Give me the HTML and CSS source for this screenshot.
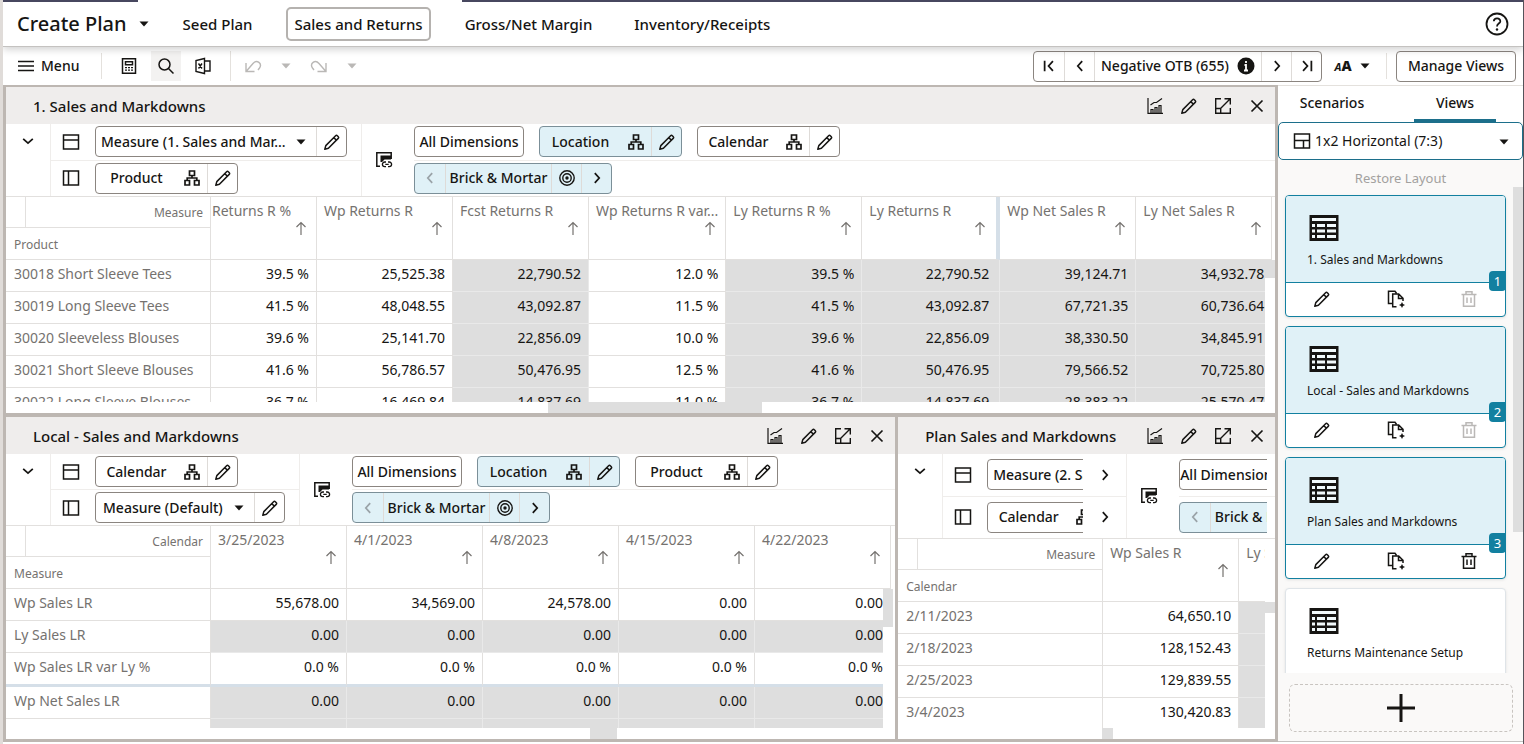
FILE: index.html
```html
<!DOCTYPE html>
<html lang="en">
<head>
    <meta charset="UTF-8">
    <meta name="viewport" content="width=device-width, initial-scale=1.0">
    <title>Create Plan - Sales and Returns</title>
    <link rel="stylesheet" href="styles.css">
</head>
<body>
    <!-- Icon set -->
    <svg class="sprite" aria-hidden="true">
        <symbol id="caret" viewBox="0 0 10 6"><path d="M0.5 0.5h9L5 5.5z" fill="currentColor"/></symbol>
        <symbol id="pencil" viewBox="0 0 18 18"><path d="M1.800 16.200l1-3.600L12.600 2.800q.9-.9 1.700-.1l1 1q.8.8-.1 1.700L5.400 15.200zM10.800 4.600l2.600 2.600" fill="none" stroke="currentColor" stroke-width="1.500" stroke-linejoin="round"/></symbol>
        <symbol id="org" viewBox="0 0 18 18"><path d="M6.500 2h5v4.500h-5zM2 11.500h4.500V16H2zM11.500 11.500H16V16h-4.500zM9 6.500V9M4.200 11.500V9h9.600v2.500" fill="none" stroke="currentColor" stroke-width="1.700"/></symbol>
        <symbol id="rows" viewBox="0 0 18 18"><path d="M1.500 2h15v14h-15zM1.500 7h15" fill="none" stroke="currentColor" stroke-width="1.500"/></symbol>
        <symbol id="cols" viewBox="0 0 18 18"><path d="M1.500 2h15v14h-15zM6.500 2v14" fill="none" stroke="currentColor" stroke-width="1.500"/></symbol>
        <symbol id="link" viewBox="0 0 18 18"><path d="M5 15.300H1.800V1.800h14.400V8" fill="none" stroke="currentColor" stroke-width="1.500"/><path d="M5.500 4.500H16V8.500H9.500L7 11H5.500z" fill="currentColor"/><path d="M11 11H9.700a2.300 2.300 0 0 0 0 4.600H11M13 11h1.300a2.300 2.300 0 0 1 0 4.600H13M10.300 13.300h3.400" fill="none" stroke="currentColor" stroke-width="1.300"/></symbol>
        <symbol id="target" viewBox="0 0 18 18"><g fill="none" stroke="currentColor" stroke-width="1.400"><circle cx="9" cy="9" r="7.200"/><circle cx="9" cy="9" r="4.200"/></g><circle cx="9" cy="9" r="1.700" fill="currentColor"/></symbol>
        <symbol id="left" viewBox="0 0 16 16"><path d="M10.500 2.500L5.500 8l5 5.500" fill="none" stroke="currentColor" stroke-width="2"/></symbol>
        <symbol id="right" viewBox="0 0 16 16"><path d="M5.500 2.500l5 5.500-5 5.500" fill="none" stroke="currentColor" stroke-width="2"/></symbol>
        <symbol id="down" viewBox="0 0 16 16"><path d="M2.500 5.500L8 10.500l5.500-5" fill="none" stroke="currentColor" stroke-width="2"/></symbol>
        <symbol id="first" viewBox="0 0 16 16"><path d="M3 2v12M12.500 2.500L7.500 8l5 5.500" fill="none" stroke="currentColor" stroke-width="2"/></symbol>
        <symbol id="last" viewBox="0 0 16 16"><path d="M13 2v12M3.500 2.500l5 5.500-5 5.500" fill="none" stroke="currentColor" stroke-width="2"/></symbol>
        <symbol id="chart" viewBox="0 0 18 18"><path d="M2 1v15.300h15M5 16v-3.500h2V16M9 16v-5.500h2V16M13 16V8.500h2V16M4.500 8l3.500-2.500h2.500L16 1.500" fill="none" stroke="currentColor" stroke-width="1.200"/></symbol>
        <symbol id="expand" viewBox="0 0 18 18"><path d="M7 1.700H1.700v14.600h14.600V11M1.700 11.500h5v4.800M6.500 11.500l9-9M10.500 1.700h5.800v5.800" fill="none" stroke="currentColor" stroke-width="1.400"/></symbol>
        <symbol id="close" viewBox="0 0 18 18"><path d="M3.500 3.500l11 11M14.500 3.500l-11 11" fill="none" stroke="currentColor" stroke-width="1.700"/></symbol>
        <symbol id="up" viewBox="0 0 12 14"><path d="M6 14V1.500M1.500 6L6 1.500 10.500 6" fill="none" stroke="currentColor" stroke-width="1.200"/></symbol>
        <symbol id="sheet" viewBox="0 0 30 26"><path d="M.5 0h29v26H.5z" fill="currentColor"/><path d="M3 3h24v3H3zM3 9h3v3H3zM8 9h8v3H8zM18 9h9v3h-9zM3 14.500h3v3H3zM8 14.500h8v3H8zM18 14.500h9v3h-9zM3 20h3v3H3zM8 20h8v3H8zM18 20h9v3h-9z" fill="#f2fafc"/></symbol>
        <symbol id="copy" viewBox="0 0 18 18"><path d="M5 13.500H1.500V1.200H8l1.500 2M9.500 16.800H5.700V4h6l4.300 4.300V11M11.500 4v4.500H16" fill="none" stroke="currentColor" stroke-width="1.500"/><path d="M15 12l1 2 2 1-2 1-1 2-1-2-2-1 2-1z" fill="currentColor"/></symbol>
        <symbol id="trash" viewBox="0 0 18 18"><path d="M1.500 4.500h15M6 4V1.700h6V4M3.500 4.500v11.800h11V4.500M7 7.500v5.500M11 7.500v5.500" fill="none" stroke="currentColor" stroke-width="1.500"/></symbol>
        <symbol id="undo" viewBox="0 0 18 18"><path d="M2 6v8.500h8.500M2.500 14L9 6.500c4-4.500 9.500 0 6.500 4.500l-1.500 2" fill="none" stroke="currentColor" stroke-width="1.400"/></symbol>
        <symbol id="redo" viewBox="0 0 18 18"><path d="M16 6v8.500H7.500M15.500 14L9 6.500C5 2-.5 6.500 2.500 11L4 13" fill="none" stroke="currentColor" stroke-width="1.400"/></symbol>
    </svg>

    <header class="topbar">
        <div class="strip"></div>
        <nav class="plan-nav">
            <button class="plan-name">Create Plan <svg class="caret"><use href="#caret"/></svg></button>
            <a href="#" class="step">Seed Plan</a>
            <a href="#" class="step active">Sales and Returns</a>
            <a href="#" class="step">Gross/Net Margin</a>
            <a href="#" class="step">Inventory/Receipts</a>
        </nav>
        <button class="help" aria-label="Help">
            <svg viewBox="0 0 24 24"><circle cx="12" cy="12" r="10.500" fill="none" stroke="currentColor" stroke-width="1.800"/><path d="M8.800 9.300c.3-4 6.700-3.600 6.500.1-.2 2.200-3.300 2.300-3.300 5" fill="none" stroke="currentColor" stroke-width="1.800"/><circle cx="12" cy="17.500" r="1.200" fill="currentColor"/></svg>
        </button>
    </header>

    <div class="toolbar">
        <button class="menu"><svg viewBox="0 0 16 16"><path d="M0 3.500h16M0 8h16M0 12.500h16" stroke="currentColor" stroke-width="1.400"/></svg>Menu</button>
        <div class="tool-group">
            <button class="tool" aria-label="Calculate"><svg class="icon" viewBox="0 0 18 18"><path d="M2.500 1.700h13v14.600h-13zM5.500 4.700h7v3h-7z" fill="none" stroke="currentColor" stroke-width="1.500"/><path d="M5 10h2v1.300H5zM8 10h2v1.300H8zM11 10h2v1.300h-2zM5 12.500h2v1.300H5zM8 12.500h2v1.300H8zM11 12.500h2v1.300h-2z" fill="currentColor"/></svg></button>
            <button class="tool hover" aria-label="Find"><svg class="icon" viewBox="0 0 18 18"><circle cx="7.500" cy="7.500" r="5.500" fill="none" stroke="currentColor" stroke-width="1.500"/><path d="M11.500 11.500l5 5" stroke="currentColor" stroke-width="1.500"/></svg></button>
            <button class="tool" aria-label="Export"><svg class="icon" viewBox="0 0 18 18"><path d="M10.500 1.500v15L2 14.500V3.500zM10.500 4H16v10h-5.500M4.500 6.500l3.500 5M8 6.500l-3.500 5" fill="none" stroke="currentColor" stroke-width="1.400"/></svg></button>
        </div>
        <div class="tool-group faded">
            <button class="tool" aria-label="Undo"><svg class="icon"><use href="#undo"/></svg></button>
            <button class="tool" aria-label="Undo list"><svg class="caret"><use href="#caret"/></svg></button>
            <button class="tool" aria-label="Redo"><svg class="icon"><use href="#redo"/></svg></button>
            <button class="tool" aria-label="Redo list"><svg class="caret"><use href="#caret"/></svg></button>
        </div>
        <div class="pager">
            <button aria-label="First"><svg class="arrow"><use href="#first"/></svg></button>
            <button aria-label="Previous"><svg class="arrow"><use href="#left"/></svg></button>
            <div class="pager-label">Negative OTB (655)
                <svg class="info" viewBox="0 0 18 18"><circle cx="9" cy="9" r="8.500" fill="currentColor"/><path d="M9 4v2M7.500 8H9v5.500M7 13.500h4" fill="none" stroke="#fff" stroke-width="1.800"/></svg>
            </div>
            <button aria-label="Next"><svg class="arrow"><use href="#right"/></svg></button>
            <button aria-label="Last"><svg class="arrow"><use href="#last"/></svg></button>
        </div>
        <button class="text-size" aria-label="Text size"><span><i>A</i><b>A</b></span> <svg class="caret"><use href="#caret"/></svg></button>
        <button class="manage">Manage Views</button>
    </div>

    <main class="content">
        <div class="workspace">
            <!-- 1. Sales and Markdowns -->
            <section class="panel main-panel">
                <div class="panel-title">
                    <h2>1. Sales and Markdowns</h2>
                    <button aria-label="Chart"><svg class="icon"><use href="#chart"/></svg></button>
                    <button aria-label="Edit"><svg class="icon"><use href="#pencil"/></svg></button>
                    <button aria-label="Maximize"><svg class="icon"><use href="#expand"/></svg></button>
                    <button aria-label="Close"><svg class="icon"><use href="#close"/></svg></button>
                </div>
                <div class="dims">
                    <button class="collapse" aria-label="Collapse"><svg class="arrow"><use href="#down"/></svg></button>
                    <div class="axes">
                        <div class="dim-row">
                            <svg class="icon"><use href="#rows"/></svg>
                            <div class="tile">
                                <span class="picker"><select class="measure" aria-label="Measure"><option>Measure (1. Sales and Mar...</option></select><svg class="caret"><use href="#caret"/></svg></span>
                                <button aria-label="Edit measure"><svg class="icon"><use href="#pencil"/></svg></button>
                            </div>
                        </div>
                        <div class="dim-row">
                            <svg class="icon"><use href="#cols"/></svg>
                            <div class="tile">
                                <button class="dim">Product</button><button class="org" aria-label="Levels"><svg class="icon"><use href="#org"/></svg></button>
                                <button aria-label="Edit product"><svg class="icon"><use href="#pencil"/></svg></button>
                            </div>
                        </div>
                    </div>
                    <div class="link"><svg class="icon"><use href="#link"/></svg></div>
                    <div class="pages">
                        <div class="dim-row">
                            <button class="tile all">All Dimensions</button>
                            <div class="tile on">
                                <button class="dim">Location</button><button class="org" aria-label="Levels"><svg class="icon"><use href="#org"/></svg></button>
                                <button aria-label="Edit location"><svg class="icon"><use href="#pencil"/></svg></button>
                            </div>
                            <div class="tile">
                                <button class="dim">Calendar</button><button class="org" aria-label="Levels"><svg class="icon"><use href="#org"/></svg></button>
                                <button aria-label="Edit calendar"><svg class="icon"><use href="#pencil"/></svg></button>
                            </div>
                        </div>
                        <div class="dim-row">
                            <div class="tile on">
                                <button class="prev" aria-label="Previous" disabled><svg class="arrow"><use href="#left"/></svg></button>
                                <button class="member">Brick &amp; Mortar</button>
                                <button aria-label="Locate"><svg class="icon"><use href="#target"/></svg></button>
                                <button aria-label="Next"><svg class="arrow"><use href="#right"/></svg></button>
                            </div>
                        </div>
                    </div>
                </div>
                <div class="grid">
                    <table>
                        <thead>
                            <tr>
                                <th class="corner"><div class="corner-top">Measure</div><div class="corner-bottom">Product</div></th>
                                <th class="cut">Returns R %<svg><use href="#up"/></svg></th>
                                <th>Wp Returns R<svg><use href="#up"/></svg></th>
                                <th>Fcst Returns R<svg><use href="#up"/></svg></th>
                                <th>Wp Returns R var...<svg><use href="#up"/></svg></th>
                                <th>Ly Returns R %<svg><use href="#up"/></svg></th>
                                <th class="break">Ly Returns R<svg><use href="#up"/></svg></th>
                                <th>Wp Net Sales R<svg><use href="#up"/></svg></th>
                                <th>Ly Net Sales R<svg><use href="#up"/></svg></th>
                            </tr>
                        </thead>
                        <tbody>
                            <tr><th>30018 Short Sleeve Tees</th><td>39.5 %</td><td>25,525.38</td><td class="ro">22,790.52</td><td>12.0 %</td><td class="ro">39.5 %</td><td class="ro break">22,790.52</td><td class="ro">39,124.71</td><td class="ro">34,932.78</td></tr>
                            <tr><th>30019 Long Sleeve Tees</th><td>41.5 %</td><td>48,048.55</td><td class="ro">43,092.87</td><td>11.5 %</td><td class="ro">41.5 %</td><td class="ro break">43,092.87</td><td class="ro">67,721.35</td><td class="ro">60,736.64</td></tr>
                            <tr><th>30020 Sleeveless Blouses</th><td>39.6 %</td><td>25,141.70</td><td class="ro">22,856.09</td><td>10.0 %</td><td class="ro">39.6 %</td><td class="ro break">22,856.09</td><td class="ro">38,330.50</td><td class="ro">34,845.91</td></tr>
                            <tr><th>30021 Short Sleeve Blouses</th><td>41.6 %</td><td>56,786.57</td><td class="ro">50,476.95</td><td>12.5 %</td><td class="ro">41.6 %</td><td class="ro break">50,476.95</td><td class="ro">79,566.52</td><td class="ro">70,725.80</td></tr>
                            <tr><th>30022 Long Sleeve Blouses</th><td>36.7 %</td><td>16,469.84</td><td class="ro">14,837.69</td><td>11.0 %</td><td class="ro">36.7 %</td><td class="ro break">14,837.69</td><td class="ro">28,383.22</td><td class="ro">25,570.47</td></tr>
                        </tbody>
                    </table>
                    <div class="vbar"><div class="thumb" style="height: 12%"></div></div>
                    <div class="hbar"><div class="thumb" style="width: 16.9%; margin-left: 42.7%"></div></div>
                </div>
            </section>

            <div class="panel-row">
                <!-- Local - Sales and Markdowns -->
                <section class="panel local">
                    <div class="panel-title">
                        <h2>Local - Sales and Markdowns</h2>
                        <button aria-label="Chart"><svg class="icon"><use href="#chart"/></svg></button>
                        <button aria-label="Edit"><svg class="icon"><use href="#pencil"/></svg></button>
                        <button aria-label="Maximize"><svg class="icon"><use href="#expand"/></svg></button>
                        <button aria-label="Close"><svg class="icon"><use href="#close"/></svg></button>
                    </div>
                    <div class="dims">
                        <button class="collapse" aria-label="Collapse"><svg class="arrow"><use href="#down"/></svg></button>
                        <div class="axes">
                            <div class="dim-row">
                                <svg class="icon"><use href="#rows"/></svg>
                                <div class="tile">
                                    <button class="dim">Calendar</button><button class="org" aria-label="Levels"><svg class="icon"><use href="#org"/></svg></button>
                                    <button aria-label="Edit calendar"><svg class="icon"><use href="#pencil"/></svg></button>
                                </div>
                            </div>
                            <div class="dim-row">
                                <svg class="icon"><use href="#cols"/></svg>
                                <div class="tile">
                                    <span class="picker"><select class="measure short" aria-label="Measure"><option>Measure (Default)</option></select><svg class="caret"><use href="#caret"/></svg></span>
                                    <button aria-label="Edit measure"><svg class="icon"><use href="#pencil"/></svg></button>
                                </div>
                            </div>
                        </div>
                        <div class="link"><svg class="icon"><use href="#link"/></svg></div>
                        <div class="pages">
                            <div class="dim-row">
                                <button class="tile all">All Dimensions</button>
                                <div class="tile on">
                                    <button class="dim">Location</button><button class="org" aria-label="Levels"><svg class="icon"><use href="#org"/></svg></button>
                                    <button aria-label="Edit location"><svg class="icon"><use href="#pencil"/></svg></button>
                                </div>
                                <div class="tile">
                                    <button class="dim">Product</button><button class="org" aria-label="Levels"><svg class="icon"><use href="#org"/></svg></button>
                                    <button aria-label="Edit product"><svg class="icon"><use href="#pencil"/></svg></button>
                                </div>
                            </div>
                            <div class="dim-row">
                                <div class="tile on">
                                    <button class="prev" aria-label="Previous" disabled><svg class="arrow"><use href="#left"/></svg></button>
                                    <button class="member">Brick &amp; Mortar</button>
                                    <button aria-label="Locate"><svg class="icon"><use href="#target"/></svg></button>
                                    <button aria-label="Next"><svg class="arrow"><use href="#right"/></svg></button>
                                </div>
                            </div>
                        </div>
                    </div>
                    <div class="grid">
                        <table>
                            <thead>
                                <tr>
                                    <th class="corner"><div class="corner-top">Calendar</div><div class="corner-bottom">Measure</div></th>
                                    <th>3/25/2023<svg><use href="#up"/></svg></th>
                                    <th>4/1/2023<svg><use href="#up"/></svg></th>
                                    <th>4/8/2023<svg><use href="#up"/></svg></th>
                                    <th>4/15/2023<svg><use href="#up"/></svg></th>
                                    <th>4/22/2023<svg><use href="#up"/></svg></th>
                                </tr>
                            </thead>
                            <tbody>
                                <tr><th>Wp Sales LR</th><td>55,678.00</td><td>34,569.00</td><td>24,578.00</td><td>0.00</td><td>0.00</td></tr>
                                <tr class="ro-row"><th>Ly Sales LR</th><td>0.00</td><td>0.00</td><td>0.00</td><td>0.00</td><td>0.00</td></tr>
                                <tr class="break-row"><th>Wp Sales LR var Ly %</th><td>0.0 %</td><td>0.0 %</td><td>0.0 %</td><td>0.0 %</td><td>0.0 %</td></tr>
                                <tr class="ro-row"><th>Wp Net Sales LR</th><td>0.00</td><td>0.00</td><td>0.00</td><td>0.00</td><td>0.00</td></tr>
                                <tr class="ro-row"><th></th><td></td><td></td><td></td><td></td><td></td></tr>
                            </tbody>
                        </table>
                        <div class="vbar"><div class="thumb" style="height: 25%"></div></div>
                        <div class="hbar"><div class="thumb" style="width: 3%; margin-left: 65.7%"></div></div>
                    </div>
                </section>

                <!-- Plan Sales and Markdowns -->
                <section class="panel plan">
                    <div class="panel-title">
                        <h2>Plan Sales and Markdowns</h2>
                        <button aria-label="Chart"><svg class="icon"><use href="#chart"/></svg></button>
                        <button aria-label="Edit"><svg class="icon"><use href="#pencil"/></svg></button>
                        <button aria-label="Maximize"><svg class="icon"><use href="#expand"/></svg></button>
                        <button aria-label="Close"><svg class="icon"><use href="#close"/></svg></button>
                    </div>
                    <div class="dims">
                        <button class="collapse" aria-label="Collapse"><svg class="arrow"><use href="#down"/></svg></button>
                        <div class="axes">
                            <div class="dim-row">
                                <svg class="icon"><use href="#rows"/></svg>
                                <div class="clip">
                                    <div class="tile">
                                        <span class="picker"><select class="measure" aria-label="Measure"><option>Measure (2. Sales and Mar...</option></select></span>
                                    </div>
                                </div>
                                <button class="more" aria-label="Scroll right"><svg class="arrow"><use href="#right"/></svg></button>
                            </div>
                            <div class="dim-row">
                                <svg class="icon"><use href="#cols"/></svg>
                                <div class="clip">
                                    <div class="tile">
                                        <button class="dim">Calendar</button><button class="org" aria-label="Levels"><svg class="icon"><use href="#org"/></svg></button>
                                    </div>
                                </div>
                                <button class="more" aria-label="Scroll right"><svg class="arrow"><use href="#right"/></svg></button>
                            </div>
                        </div>
                        <div class="link"><svg class="icon"><use href="#link"/></svg></div>
                        <div class="pages">
                            <div class="dim-row">
                                <div class="clip"><button class="tile all">All Dimensions</button></div>
                            </div>
                            <div class="dim-row">
                                <div class="clip">
                                    <div class="tile on">
                                        <button class="prev" aria-label="Previous" disabled><svg class="arrow"><use href="#left"/></svg></button>
                                        <button class="member">Brick &amp; Mortar</button>
                                    </div>
                                </div>
                            </div>
                        </div>
                    </div>
                    <div class="grid">
                        <table>
                            <thead>
                                <tr>
                                    <th class="corner"><div class="corner-top">Measure</div><div class="corner-bottom">Calendar</div></th>
                                    <th>Wp Sales R<svg><use href="#up"/></svg></th>
                                    <th>Ly Sales R<svg><use href="#up"/></svg></th>
                                </tr>
                            </thead>
                            <tbody>
                                <tr><th>2/11/2023</th><td>64,650.10</td><td class="ro"></td></tr>
                                <tr><th>2/18/2023</th><td>128,152.43</td><td class="ro"></td></tr>
                                <tr><th>2/25/2023</th><td>129,839.55</td><td class="ro"></td></tr>
                                <tr><th>3/4/2023</th><td>130,420.83</td><td class="ro"></td></tr>
                            </tbody>
                        </table>
                        <div class="vbar"><div class="thumb" style="height: 8%"></div></div>
                        <div class="hbar"><div class="thumb" style="width: 3%; margin-left: 54%"></div></div>
                    </div>
                </section>
            </div>
        </div>

        <!-- Scenario / view side panel -->
        <aside class="side">
            <div class="tabs">
                <button>Scenarios</button>
                <button class="selected">Views</button>
            </div>
            <div class="layout-picker">
                <svg class="icon" viewBox="0 0 18 18"><path d="M1.500 2h15v14h-15zM1.500 8.500h15M10.500 8.500V16" fill="none" stroke="currentColor" stroke-width="1.500"/></svg>
                <select aria-label="Layout"><option>1x2 Horizontal (7:3)</option></select>
                <svg class="caret"><use href="#caret"/></svg>
            </div>
            <button class="restore" disabled>Restore Layout</button>
            <div class="views">
                <div class="cards">
                    <article class="card in-use">
                        <div class="card-body"><svg class="sheet"><use href="#sheet"/></svg><p>1. Sales and Markdowns</p></div>
                        <span class="badge">1</span>
                        <div class="card-actions">
                            <button aria-label="Edit"><svg class="icon"><use href="#pencil"/></svg></button>
                            <button aria-label="Copy"><svg class="icon"><use href="#copy"/></svg></button>
                            <button aria-label="Delete" disabled><svg class="icon"><use href="#trash"/></svg></button>
                        </div>
                    </article>
                    <article class="card in-use">
                        <div class="card-body"><svg class="sheet"><use href="#sheet"/></svg><p>Local - Sales and Markdowns</p></div>
                        <span class="badge">2</span>
                        <div class="card-actions">
                            <button aria-label="Edit"><svg class="icon"><use href="#pencil"/></svg></button>
                            <button aria-label="Copy"><svg class="icon"><use href="#copy"/></svg></button>
                            <button aria-label="Delete" disabled><svg class="icon"><use href="#trash"/></svg></button>
                        </div>
                    </article>
                    <article class="card in-use">
                        <div class="card-body"><svg class="sheet"><use href="#sheet"/></svg><p>Plan Sales and Markdowns</p></div>
                        <span class="badge">3</span>
                        <div class="card-actions">
                            <button aria-label="Edit"><svg class="icon"><use href="#pencil"/></svg></button>
                            <button aria-label="Copy"><svg class="icon"><use href="#copy"/></svg></button>
                            <button aria-label="Delete"><svg class="icon"><use href="#trash"/></svg></button>
                        </div>
                    </article>
                    <article class="card">
                        <div class="card-body"><svg class="sheet"><use href="#sheet"/></svg><p>Returns Maintenance Setup</p></div>
                    </article>
                </div>
                <div class="side-bar"><div class="thumb" style="height: 71%"></div></div>
            </div>
            <button class="add" aria-label="Add view"><svg viewBox="0 0 28 28"><path d="M14 0v28M0 14h28" stroke="currentColor" stroke-width="3"/></svg></button>
        </aside>
    </main>
</body>
</html>
```

FILE: styles.css
```css
* {
    box-sizing: border-box;
}
body {
    margin: 0;
    height: 100vh;
    display: flex;
    flex-direction: column;
    overflow: hidden;
    border-left: 3px solid #e0dcd9;
    border-right: 1px solid #55535a;
    padding-bottom: 2px;
    background-color: #fff;
    color: #161513;
    font-family: "Noto Sans", "Open Sans", sans-serif;
    font-size: 14px;
    line-height: 20px;
}
button, select {
    font: inherit;
    color: inherit;
    background: none;
    border: none;
    margin: 0;
    padding: 0;
    cursor: pointer;
}
button {
    display: flex;
    align-items: center;
    justify-content: center;
    font-weight: 500;
    white-space: nowrap;
    flex-shrink: 0;
}
select {
    appearance: none;
    font-weight: 500;
}
svg {
    display: block;
    flex-shrink: 0;
}
.sprite {
    display: none;
}
.icon {
    width: 18px;
    height: 18px;
}
.arrow {
    width: 14px;
    height: 14px;
}
.caret {
    width: 10px;
    height: 6px;
}

/* Header */
.topbar {
    position: relative;
    display: flex;
    justify-content: space-between;
    align-items: center;
    height: 47px;
    flex-shrink: 0;
    padding: 2px 14px 0;
    border-bottom: 1px solid #c4c2c0;
    box-shadow: 0 2px 8px rgba(0, 0, 0, 0.2);
}
.strip {
    position: absolute;
    top: 0;
    left: 0;
    right: 0;
    height: 2px;
    background: linear-gradient(to right, #47475f 135px, #fff 135px, #fff 459px, #47475f 459px);
}
.plan-nav {
    display: flex;
    align-items: center;
    gap: 26px;
}
.plan-name {
    font-size: 20px;
    gap: 12px;
}
.step {
    padding: 5px 6px;
    border: 2px solid transparent;
    border-radius: 5px;
    color: inherit;
    text-decoration: none;
    font-size: 15px;
    font-weight: 500;
}
.step.active {
    border-color: #b5b2af;
}
.help svg {
    width: 24px;
    height: 24px;
}

/* Toolbar */
.toolbar {
    display: flex;
    align-items: center;
    height: 38px;
    flex-shrink: 0;
    padding: 0 7px 0 15px;
}
.menu {
    width: 84px;
    height: 26px;
    justify-content: flex-start;
    gap: 7px;
    border-right: 1px solid #e4e1dd;
}
.menu svg {
    width: 16px;
    height: 16px;
}
.tool-group {
    display: flex;
    gap: 7px;
    padding: 0 12px;
}
.tool {
    width: 30px;
    height: 30px;
}
.tool.hover {
    background-color: #f3f2f1;
}
.faded {
    gap: 3px;
    padding: 0 7px;
    border-left: 1px solid #e4e1dd;
    color: #bab8b6;
}
.pager {
    display: flex;
    margin-left: auto;
    height: 31px;
    border: 1px solid #8b8580;
    border-radius: 4px;
}
.pager button {
    width: 30px;
}
.pager > * + * {
    border-left: 1px solid #dedbd8;
}
.pager-label {
    display: flex;
    align-items: center;
    justify-content: space-between;
    width: 167px;
    padding: 0 6px;
    font-weight: 500;
}
.info {
    width: 18px;
    height: 18px;
}
.text-size {
    width: 65px;
    height: 26px;
    gap: 8px;
    padding-right: 4px;
    border-right: 1px solid #e4e1dd;
    font-weight: 700;
}
.text-size i {
    font-size: 11px;
}
.manage {
    width: 120px;
    height: 31px;
    margin-left: 9px;
    border: 1px solid #8b8580;
    border-radius: 4px;
}

/* Workspace */
.content {
    display: flex;
    flex: 1;
    min-height: 0;
}
.workspace {
    flex: 1;
    min-width: 0;
    display: flex;
    flex-direction: column;
    gap: 4px;
    border: 3px solid #bdb7b2;
    border-top-width: 2px;
    background-color: #bdb7b2;
}
.panel-row {
    flex: 1 1 0;
    min-height: 0;
    display: flex;
    gap: 3px;
}
.panel {
    min-width: 0;
    min-height: 0;
    display: flex;
    flex-direction: column;
    background-color: #fff;
}
.main-panel {
    flex: 1 1 4px;
}
.local {
    flex: 7 1 10px;
}
.plan {
    flex: 3 1 0;
}
.panel-title {
    display: flex;
    align-items: center;
    gap: 16px;
    height: 37px;
    flex-shrink: 0;
    padding: 0 9px 0 27px;
    background-color: #efedec;
}
.panel-title h2 {
    flex: 1;
    margin: 0;
    font-size: 15px;
    font-weight: 500;
    white-space: nowrap;
}

/* Dimension tiles */
.dims {
    display: flex;
    height: 73px;
    flex-shrink: 0;
    border-bottom: 1px solid #e2e0de;
}
.local .dims {
    height: 72px;
}
.plan .dims {
    height: 85px;
}
.collapse {
    width: 45px;
    align-items: flex-start;
    padding-top: 10px;
    border-right: 1px solid #efedeb;
}
.axes {
    display: flex;
    flex-direction: column;
    border-right: 1px solid #efedeb;
}
.dim-row {
    display: flex;
    flex: 1;
    align-items: center;
    gap: 15px;
}
.dim-row:first-child {
    border-bottom: 1px solid #efedeb;
}
.axes .dim-row {
    padding: 0 14px 0 11px;
}
.link {
    display: flex;
    align-items: center;
    width: 52px;
    flex-shrink: 0;
    padding-left: 13px;
}
.pages {
    display: flex;
    flex-direction: column;
    flex: 1;
    min-width: 0;
}
.tile {
    display: flex;
    height: 31px;
    flex-shrink: 0;
    border: 1px solid #8b8580;
    border-radius: 4px;
}
.tile.on {
    background-color: #e0f1f7;
    border-color: #7b8f98;
}
.tile.all {
    width: 110px;
}
.tile button {
    width: 30px;
}
.tile > * + * {
    border-left: 1px solid #dedbd8;
}
.tile .dim {
    width: 81px;
}
.tile .org {
    border-left: none;
}
.tile .member {
    width: 106px;
}
.prev {
    color: #9aa3a8;
}
.picker {
    position: relative;
}
.picker .caret {
    position: absolute;
    right: 10px;
    top: 12px;
}
.measure {
    width: 220px;
    height: 29px;
    padding: 0 26px 0 5px;
}
.measure.short {
    width: 158px;
    padding-left: 7px;
}
.clip {
    width: 96px;
    overflow: hidden;
}
.clip .tile {
    width: max-content;
}
.pages .clip {
    width: 88px;
}
.plan .axes .dim-row {
    gap: 0;
    padding: 0 0 0 11px;
}
.plan .axes .clip {
    margin-left: 15px;
}
.more {
    width: 43px;
    height: 31px;
}

/* Data grids */
.grid {
    position: relative;
    flex: 1;
    min-height: 0;
    overflow: hidden;
}
table {
    border-collapse: separate;
    border-spacing: 0;
}
th, td {
    height: 32px;
    padding: 0 7px 3px;
    border-right: 1px solid #e2e0de;
    border-bottom: 1px solid #e2e0de;
    white-space: nowrap;
    font-weight: 400;
}
td {
    text-align: right;
}
th {
    text-align: left;
    color: #75726f;
}
thead th {
    min-width: 136px;
    height: 63px;
    padding: 4px 7px 0;
    vertical-align: top;
}
thead th svg {
    width: 12px;
    height: 14px;
    margin: 0 2px 0 auto;
}
thead .cut {
    min-width: 106px;
    padding-left: 1px;
}
thead .corner {
    min-width: 205px;
    padding: 0;
    font-size: 12px;
}
.corner-top {
    height: 31px;
    padding: 6px 7px 0 0;
    border-bottom: 1px solid #e2e0de;
    background: linear-gradient(#e2e0de, #e2e0de) 19px 0 / 1px 100% no-repeat;
    text-align: right;
}
.corner-bottom {
    padding: 7px 8px 0;
}
tbody th {
    padding-left: 8px;
}
.ro, .ro-row td {
    background-color: #dedede;
    border-color: #e9e9e9;
}
thead .break {
    min-width: 138px;
    padding-right: 8px;
    border-right: 4px solid #d5dfe8;
}
td.break {
    padding-right: 10px;
}
.break-row th, .break-row td {
    height: 34px;
    border-bottom: 3px solid #d5dfe8;
}
.vbar, .hbar {
    position: absolute;
    background-color: #fff;
}
.vbar {
    top: 63px;
    right: 0;
    bottom: 0;
    width: 10px;
}
.local .vbar {
    width: 12px;
    padding-right: 2px;
}
.plan .vbar {
    top: 0;
    padding-top: 63px;
}
.hbar {
    left: 0;
    right: 0;
    bottom: 0;
    height: 11px;
}
.thumb {
    height: 100%;
    background-color: #dedede;
}

/* Side panel */
.side {
    display: flex;
    flex-direction: column;
    width: 245px;
    flex-shrink: 0;
    background-color: #faf9f8;
    border-bottom: 1px solid #c4c2c0;
}
.tabs {
    display: flex;
    height: 37px;
    flex-shrink: 0;
    padding: 0 13px;
    justify-content: space-between;
    background-color: #fff;
    border-top: 1px solid #e4e1dd;
}
.tabs button {
    width: 82px;
    border-bottom: 3px solid transparent;
}
.tabs .selected {
    border-bottom-color: #1c6f8b;
    margin-right: 14px;
}
.layout-picker {
    position: relative;
    height: 38px;
    flex-shrink: 0;
    border: 1px solid #1c6f8b;
    border-radius: 5px;
    background-color: #fff;
}
.layout-picker select {
    width: 100%;
    height: 100%;
    padding-left: 36px;
    font-weight: 400;
}
.layout-picker svg {
    position: absolute;
    top: 9px;
    left: 14px;
    pointer-events: none;
}
.layout-picker .caret {
    top: 16px;
    left: auto;
    right: 13px;
}
.restore {
    height: 27px;
    padding-top: 9px;
    color: #a3a19f;
    font-size: 13px;
    font-weight: 400;
}
.views {
    display: flex;
    justify-content: space-between;
    flex: 1;
    min-height: 0;
}
.cards {
    display: flex;
    flex-direction: column;
    gap: 9px;
    flex: 1;
    padding: 8px 7px 0;
    overflow: hidden;
}
.side-bar {
    width: 10px;
}
.card {
    position: relative;
    flex-shrink: 0;
    height: 122px;
    border: 1px solid #dfe4e8;
    border-radius: 4px;
    background-color: #fff;
    box-shadow: 0 1px 3px rgba(0, 0, 0, 0.1);
}
.card.in-use {
    border-color: #1280a0;
}
.card-body {
    height: 87px;
    padding: 19px 21px 0;
}
.in-use .card-body {
    background-color: #e0f1f7;
    border-bottom: 1px solid #1280a0;
    border-radius: 3px 3px 0 0;
}
.card-body p {
    margin: 9px 0 0;
    font-size: 12px;
}
.sheet {
    width: 34px;
    height: 26px;
}
.badge {
    position: absolute;
    right: -1px;
    top: 75px;
    width: 17px;
    height: 20px;
    border-radius: 4px 0 4px 4px;
    background-color: #1280a0;
    color: #fff;
    font-size: 13px;
    text-align: center;
}
.card-actions {
    display: flex;
    justify-content: space-between;
    padding: 7px 27px;
}
.card-actions button:disabled {
    color: #bab8b6;
}
.add {
    height: 48px;
    margin: 11px 10px 9px 11px;
    border: 1px dashed #c8c4c0;
    border-radius: 6px;
}
.add svg {
    width: 28px;
    height: 28px;
}
```
